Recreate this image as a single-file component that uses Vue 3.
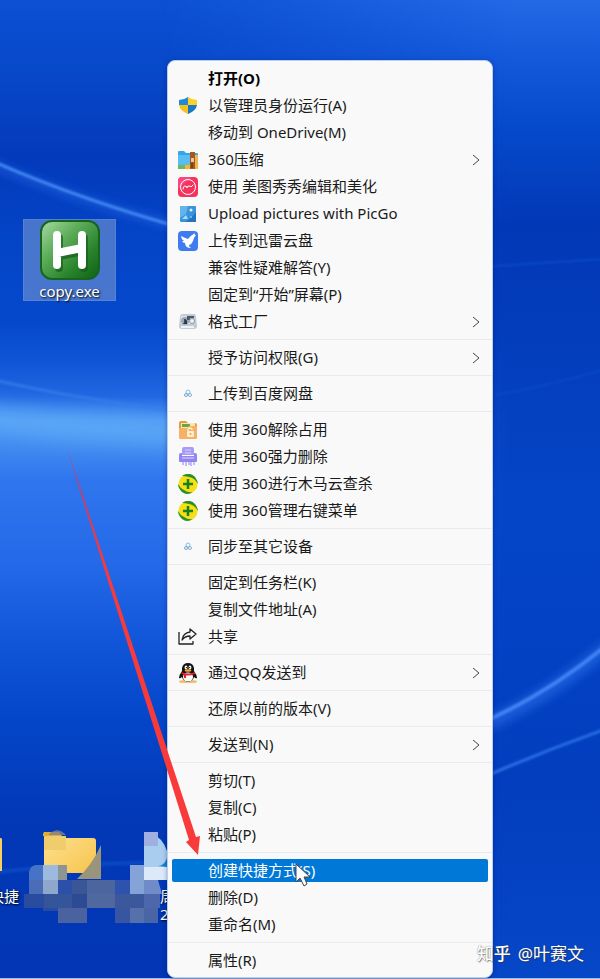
<script setup>
// Desktop with the classic right-click menu opened on copy.exe
import { ref } from "vue";

const groups = [
  [
    { key: "open", label: "打开(O)", bold: true },
    { key: "admin", label: "以管理员身份运行(A)", icon: "shield" },
    { key: "onedrive", label: "移动到 OneDrive(M)" },
    { key: "zip", label: "360压缩", icon: "zip", sub: true },
    { key: "meitu", label: "使用 美图秀秀编辑和美化", icon: "meitu" },
    { key: "picgo", label: "Upload pictures with PicGo", icon: "picgo" },
    { key: "xunlei", label: "上传到迅雷云盘", icon: "xunlei" },
    { key: "compat", label: "兼容性疑难解答(Y)" },
    { key: "pinstart", label: "固定到“开始”屏幕(P)" },
    { key: "format", label: "格式工厂", icon: "format", sub: true },
  ],
  [{ key: "access", label: "授予访问权限(G)", sub: true }],
  [{ key: "baidu", label: "上传到百度网盘", icon: "cloud" }],
  [
    { key: "unlock", label: "使用 360解除占用", icon: "unlock" },
    { key: "shred", label: "使用 360强力删除", icon: "shred" },
    { key: "scan", label: "使用 360进行木马云查杀", icon: "ball" },
    { key: "manage", label: "使用 360管理右键菜单", icon: "ball" },
  ],
  [{ key: "sync", label: "同步至其它设备", icon: "cloud" }],
  [
    { key: "pintask", label: "固定到任务栏(K)" },
    { key: "copypath", label: "复制文件地址(A)" },
    { key: "share", label: "共享", icon: "share" },
  ],
  [{ key: "qq", label: "通过QQ发送到", icon: "qq", sub: true }],
  [{ key: "restore", label: "还原以前的版本(V)" }],
  [{ key: "sendto", label: "发送到(N)", sub: true }],
  [
    { key: "cut", label: "剪切(T)" },
    { key: "copy", label: "复制(C)" },
    { key: "paste", label: "粘贴(P)" },
  ],
  [
    { key: "shortcut", label: "创建快捷方式(S)" },
    { key: "delete", label: "删除(D)" },
    { key: "rename", label: "重命名(M)" },
  ],
  [{ key: "props", label: "属性(R)" }],
];

const active = ref("shortcut");
</script>

<template>
  <main class="desktop">
    <svg class="wallpaper" viewBox="0 0 600 979" preserveAspectRatio="none" aria-hidden="true">
      <defs>
        <linearGradient id="wLeft" x1="0" y1="0" x2="0" y2="1">
          <stop offset="0" stop-color="#0d50d4" />
          <stop offset="0.08" stop-color="#0747c8" />
          <stop offset="0.16" stop-color="#033abb" />
          <stop offset="0.25" stop-color="#0445c8" />
          <stop offset="0.33" stop-color="#0648cc" />
          <stop offset="0.37" stop-color="#0f55d6" />
          <stop offset="0.405" stop-color="#2268e2" />
          <stop offset="0.43" stop-color="#468ff2" />
          <stop offset="0.46" stop-color="#3f88f0" />
          <stop offset="0.49" stop-color="#2f76ee" />
          <stop offset="0.58" stop-color="#2368e8" />
          <stop offset="0.66" stop-color="#1054d8" />
          <stop offset="0.74" stop-color="#0445c8" />
          <stop offset="0.84" stop-color="#0238b6" />
          <stop offset="1" stop-color="#0236b4" />
        </linearGradient>
        <linearGradient id="wRight" x1="0" y1="0" x2="0" y2="1">
          <stop offset="0" stop-color="#2269e6" />
          <stop offset="0.06" stop-color="#1459da" />
          <stop offset="0.13" stop-color="#054acb" />
          <stop offset="0.23" stop-color="#0238b6" />
          <stop offset="0.36" stop-color="#033ebc" />
          <stop offset="0.5" stop-color="#0444c6" />
          <stop offset="0.65" stop-color="#0342c4" />
          <stop offset="0.8" stop-color="#023ebe" />
          <stop offset="1" stop-color="#0647c8" />
        </linearGradient>
        <linearGradient id="wFade" x1="0" y1="0" x2="1" y2="0">
          <stop offset="0.27" stop-color="#fff" stop-opacity="0" />
          <stop offset="0.85" stop-color="#fff" />
        </linearGradient>
        <mask id="wMask"><rect width="600" height="979" fill="url(#wFade)" /></mask>
        <filter id="wSoft" x="-20%" y="-60%" width="140%" height="220%"><feGaussianBlur stdDeviation="9" /></filter>
        <filter id="wMid" x="-20%" y="-60%" width="140%" height="220%"><feGaussianBlur stdDeviation="4" /></filter>
        <filter id="wThin" x="-20%" y="-60%" width="140%" height="220%"><feGaussianBlur stdDeviation="1" /></filter>
      </defs>
      <rect width="600" height="979" fill="url(#wLeft)" />
      <rect width="600" height="979" fill="url(#wRight)" mask="url(#wMask)" />
      <!-- left ribbons -->
      <path d="M-30 404Q60 412 220 420V446Q60 444 -30 430Z" fill="#60acf8" opacity="0.8" filter="url(#wSoft)" />
      <path d="M-10 379Q70 398 190 413" fill="none" stroke="#3a7dea" stroke-width="3" opacity="0.7" filter="url(#wThin)" />
      <path d="M-10 163Q80 203 190 229" fill="none" stroke="#2d73ec" stroke-width="9" opacity="0.4" filter="url(#wMid)" />
      <path d="M-10 160Q80 200 190 230" fill="none" stroke="#4388f4" stroke-width="3" filter="url(#wThin)" />
      <path d="M-10 873Q80 862 190 862" fill="none" stroke="#1462d8" stroke-width="4" opacity="0.4" filter="url(#wThin)" />
      <!-- right ribbons -->
      <path d="M470 732Q550 698 620 636" fill="none" stroke="#2f75ee" stroke-width="14" opacity="0.5" filter="url(#wMid)" />
      <path d="M470 728Q550 695 620 634" fill="none" stroke="#4282f4" stroke-width="4" filter="url(#wThin)" />
      <path d="M470 783Q545 750 620 724" fill="none" stroke="#2a6ee4" stroke-width="3" filter="url(#wThin)" />
      <path d="M480 267L620 258" fill="none" stroke="#0c50cc" stroke-width="3" opacity="0.5" filter="url(#wThin)" />
      <path d="M480 397Q560 385 620 364" fill="none" stroke="#0d50cc" stroke-width="3" opacity="0.4" filter="url(#wThin)" />
      <rect y="978" width="600" height="1" fill="#9fbce8" />
    </svg>

    <button class="shortcut" type="button">
      <svg class="app-icon" viewBox="0 0 60 60" aria-hidden="true">
        <defs>
          <linearGradient id="ahk" x1="0" y1="0" x2="1" y2="1">
            <stop offset="0" stop-color="#a9dba4" />
            <stop offset="0.35" stop-color="#5fae5b" />
            <stop offset="0.7" stop-color="#28822b" />
            <stop offset="1" stop-color="#0f6216" />
          </linearGradient>
        </defs>
        <rect x="1" y="1" width="58" height="58" rx="11" fill="url(#ahk)" stroke="#17651d" stroke-width="2" />
        <path d="M18 16V46M43 16V46M18 34L43 29" transform="translate(1 2)" fill="none" stroke="#175c1b" stroke-width="8" stroke-linecap="round" opacity="0.7" />
        <path d="M17 15V45M42 15V45M17 33L42 28" fill="none" stroke="#fff" stroke-width="8" stroke-linecap="round" />
      </svg>
      <span class="app-name">copy.exe</span>
    </button>

    <!-- bottom row of desktop items, partly covered by mosaic -->
    <svg class="mosaic" viewBox="0 0 170 110" aria-hidden="true">
      <defs>
        <linearGradient id="fold" x1="0" y1="0" x2="1" y2="1">
          <stop offset="0" stop-color="#ffe394" />
          <stop offset="1" stop-color="#f6c34c" />
        </linearGradient>
      </defs>
      <path d="M0 18H1Q2 18 2 20V51H0Z" fill="#f8cf60" />
      <path d="M44 12H57L62 18H93Q96 18 96 21V50Q96 53 93 53H44Z" fill="url(#fold)" />
      <path d="M43 14Q43 12 46 12H59L62 16H43Z" fill="#e2ab35" />
      <path d="M49 14Q58 6 66 15H49Z" fill="#7c8290" opacity="0.8" />
      <rect x="44" y="16" width="22" height="14" fill="#f0cd6c" />
      <path d="M101 25V59H77Q92 45 101 25Z" fill="#9a947d" />
      <path d="M144 12H150Q163 18 167 31V60H144Z" fill="#a9cdef" />
      <path d="M144 12H158V26H144Z" fill="#9fb0e0" />
      <path d="M158 46Q164 46 167 38V47Z" fill="#1584cc" />
      <path d="M144 47H170V60H144Z" fill="#dce9f8" />
      <path d="M36 45H43V60H29V52Q30 46 36 45Z" fill="#4773c6" />
      <rect x="43" y="45" width="15" height="15" fill="#9db9dd" />
      <rect x="58" y="45" width="9" height="15" fill="#8d9494" />
      <rect x="29" y="60" width="14" height="14" fill="#4b6cb6" />
      <rect x="43" y="60" width="15" height="14" fill="#8fa7cd" />
      <rect x="58" y="60" width="14" height="14" fill="#2c50aa" />
      <rect x="72" y="60" width="15" height="14" fill="#3b5696" />
      <rect x="87" y="60" width="28" height="14" fill="#4c659f" />
      <rect x="115" y="60" width="15" height="14" fill="#2e53ae" />
      <rect x="130" y="45" width="14" height="29" fill="#86a3d8" />
      <path d="M144 60H158L162 74H144Z" fill="#6f8cc8" />
      <rect x="24" y="74" width="20" height="14" fill="#294c9f" />
      <rect x="44" y="74" width="28" height="14" fill="#35559b" />
      <rect x="72" y="74" width="15" height="14" fill="#2d4b94" />
      <rect x="87" y="74" width="28" height="14" fill="#5068a0" />
      <rect x="115" y="74" width="29" height="14" fill="#3c589c" />
      <path d="M144 74H160V88H144Z" fill="#4c67ab" />
      <rect x="43" y="88" width="15" height="3" fill="#284ca4" />
      <rect x="58" y="88" width="29" height="15" fill="#4a62a0" />
      <rect x="115" y="88" width="15" height="15" fill="#3755a0" />
      <rect x="130" y="88" width="14" height="15" fill="#5570aa" />
      <rect x="144" y="88" width="14" height="15" fill="#4a65a6" />
    </svg>
    <span class="cut-name left-name">快捷</span>
    <span class="cut-name right-name">周<br />2</span>

    <nav class="menu" aria-label="右键菜单">
      <ul v-for="(group, g) in groups" :key="g" class="group">
        <li v-for="item in group" :key="item.key">
          <button
            type="button"
            class="item"
            :class="{ bold: item.bold, active: item.key === active }"
            @mouseenter="active = item.key"
          >
            <svg class="icon" viewBox="0 0 20 20" aria-hidden="true">
              <g v-if="item.icon === 'shield'">
                <path d="M10 1Q6 4 1 4V9H10Z" fill="#2089d8" />
                <path d="M10 1Q14 4 19 4V9H10Z" fill="#fdd028" />
                <path d="M1 9H10V18Q2 15 1 9Z" fill="#f8c21c" />
                <path d="M19 9H10V18Q18 15 19 9Z" fill="#1579c8" />
              </g>
              <g v-else-if="item.icon === 'zip'">
                <path d="M0 2Q0 1 1 1H6L8 3H19Q20 3 20 4V17Q20 19 18 19H0Z" fill="#36a4e8" />
                <path d="M0 5H12V16H0Z" fill="#58bdf3" />
                <path d="M0 15H12V19H1Q0 19 0 18Z" fill="#6cb868" />
                <path d="M7 15H20V18Q20 19 19 19H7Z" fill="#f2b92b" />
                <path d="M17 5H20V17H17Z" fill="#eab850" />
                <rect x="12" y="2" width="5" height="17" fill="#a85524" />
                <path d="M13 8H16V12H13Z" fill="#e8c698" />
                <path d="M14 13V18" stroke="#5c2a10" stroke-width="1" />
              </g>
              <g v-else-if="item.icon === 'meitu'">
                <rect width="20" height="20" rx="4" fill="#f4335f" />
                <path d="M0 12V4Q0 0 4 0H14Z" fill="#fb457d" />
                <circle cx="10" cy="10" r="7.500" fill="none" stroke="#fff" stroke-width="1" />
                <path d="M5 12Q5 9 7 9T9 11Q9 9 11 9T13 10L15 8" fill="none" stroke="#fff" stroke-width="1" stroke-linecap="round" />
              </g>
              <g v-else-if="item.icon === 'picgo'">
                <rect x="2" y="2" width="16" height="16" rx="1" fill="#3b93db" />
                <path d="M2 2H10L8 10L2 14Z" fill="#62b4ec" />
                <path d="M18 8V18H7Q13 15 18 8Z" fill="#2375bf" />
                <circle cx="13" cy="6" r="1.500" fill="#d8f0ff" />
                <path d="M4 15L8 11L10 15Z" fill="#a9dbfa" />
                <circle cx="13" cy="13" r="1" fill="#79c4f3" />
              </g>
              <g v-else-if="item.icon === 'xunlei'">
                <rect width="20" height="20" rx="4" fill="#3f7cf2" />
                <path d="M3 5Q7 7 10 8Q12 5 17 2Q16 4 18 4Q16 6 15 10Q14 13 11 14Q11 16 13 17Q7 17 7 12Q5 12 4 10L6 10Q3 8 3 5Z" fill="#fff" />
              </g>
              <g v-else-if="item.icon === 'format'">
                <path d="M2 5Q2 2 5 2H16Q18 2 18 5L19 14Q19 17 16 17H4Q1 17 1 14Z" fill="#c4cad3" />
                <path d="M3 4H12V12H3Z" fill="#dfe4ea" />
                <circle cx="7" cy="9" r="4" fill="#9ba8b8" />
                <path d="M6 7Q10 7 9 12H5Q7 10 6 7Z" fill="#2a3a50" />
                <path d="M9 4H16V6H12V8H9Z" fill="#4c5868" />
                <circle cx="14" cy="9" r="2.500" fill="#edf1f5" stroke="#8f98a4" />
                <path d="M3 15H16" stroke="#eef1f5" stroke-width="2" />
              </g>
              <g v-else-if="item.icon === 'cloud'" fill="none" stroke-width="1" opacity="0.8">
                <circle cx="10" cy="8" r="2" stroke="#6aaed8" />
                <circle cx="8" cy="11" r="1.500" stroke="#4a93cf" />
                <circle cx="12" cy="11" r="1.500" stroke="#6d9cc0" />
              </g>
              <g v-else-if="item.icon === 'unlock'">
                <path d="M1 3Q1 1 3 1H8L10 3H17Q19 3 19 5V17Q19 19 17 19H3Q1 19 1 17Z" fill="#e9983a" />
                <path d="M3 3H17V8H3Z" fill="#f7e7b5" />
                <path d="M4 4H12V7H4Z" fill="#64a842" />
                <path d="M1 8H9L11 6H19V17Q19 19 17 19H3Q1 19 1 17Z" fill="#f6b165" />
                <rect x="9" y="11" width="7" height="6" rx="1" fill="#fff0d2" />
                <path d="M10 11V9Q12 7 14 9V10" fill="none" stroke="#fff0d2" stroke-width="1.300" />
                <circle cx="12.500" cy="14" r="1" fill="#ee9c3e" />
              </g>
              <g v-else-if="item.icon === 'shred'">
                <path d="M4 2Q4 0 6 0H14Q16 0 16 2V8H4Z" fill="#a79bf5" />
                <path d="M7 3H13M7 6H13" stroke="#d6cffd" stroke-width="1" />
                <path d="M1 8Q1 6 3 6H4V9H16V6H17Q19 6 19 8V14Q19 15 18 15H2Q1 15 1 14Z" fill="#9185f0" />
                <path d="M4 11H16" stroke="#b5acfa" stroke-width="2" />
                <path d="M5 15V18M8 15V19M11 15V18M13 15V19M16 15V18" stroke="#a79bf5" stroke-width="1.300" />
              </g>
              <g v-else-if="item.icon === 'ball'">
                <circle cx="10" cy="10" r="9.500" fill="#f8de15" />
                <path d="M4 2Q11 -3 17 3Q20 7 20 10Q17 4 11 3Q7 2 4 2Z" fill="#2a9028" />
                <path d="M0 10Q0 14 4 18Q9 22 15 18Q10 19 6 16Q2 14 0 10Z" fill="#2a9028" />
                <path d="M10 5V15M5 10H15" stroke="#14801f" stroke-width="2.500" />
              </g>
              <g v-else-if="item.icon === 'share'" fill="none" stroke="#222" stroke-width="1.300" stroke-linejoin="round">
                <path d="M1 5V17H15V14" />
                <path d="M12 2L18 7L12 12V9Q7 9 4 13Q5 6 12 5Z" />
              </g>
              <g v-else-if="item.icon === 'qq'">
                <ellipse cx="6" cy="18.500" rx="5" ry="1.500" fill="#f2c06a" />
                <ellipse cx="14" cy="18.500" rx="5" ry="1.500" fill="#f2c06a" />
                <path d="M10 0Q15 0 16 5V8Q19 12 19 15Q18 16 16 14Q15 18 10 19Q5 18 4 14Q2 16 1 15Q1 12 4 8V5Q5 0 10 0Z" fill="#141414" />
                <ellipse cx="10" cy="14" rx="5" ry="4.500" fill="#fff" />
                <ellipse cx="8" cy="4.500" rx="1.400" ry="2" fill="#fff" />
                <ellipse cx="12" cy="4.500" rx="1.400" ry="2" fill="#fff" />
                <circle cx="8.400" cy="4.600" r="0.700" fill="#111" />
                <circle cx="11.600" cy="4.600" r="0.700" fill="#111" />
                <ellipse cx="10" cy="7.500" rx="3.300" ry="1.200" fill="#f5ac22" />
                <path d="M3 9Q10 12 17 9V11Q12 13 8 12.500V15H6V12Q3 11 3 9Z" fill="#e0202a" />
              </g>
            </svg>
            <span class="label">{{ item.label }}</span>
            <svg v-if="item.sub" class="chevron" viewBox="0 0 8 12" aria-hidden="true">
              <path d="M1 1L7 6L1 11" fill="none" stroke="#444" stroke-width="1" />
            </svg>
          </button>
        </li>
      </ul>
    </nav>

    <!-- red pointer arrow -->
    <svg class="arrow" viewBox="0 0 136 402" aria-hidden="true">
      <defs>
        <linearGradient id="tail" gradientUnits="userSpaceOnUse" x1="0" y1="0" x2="0" y2="402">
          <stop offset="0" stop-color="#c04080" stop-opacity="0.3" />
          <stop offset="0.1" stop-color="#d03c5c" stop-opacity="0.9" />
          <stop offset="0.3" stop-color="#f93a3a" />
        </linearGradient>
      </defs>
      <path d="M0 0H1L128 384L132 383L130 402L118 389L121 387Z" fill="url(#tail)" />
    </svg>

    <svg class="cursor" viewBox="0 0 16 24" aria-hidden="true">
      <path d="M1 1V19L5 15L9 23L12 21L9 14H15Z" fill="#fff" stroke="#444" stroke-width="1" stroke-linejoin="round" />
    </svg>

    <p class="watermark"><b>知乎</b><span>@叶赛文</span></p>
  </main>
</template>

<style>
body {
  margin: 0;
}
</style>

<style scoped>
.desktop {
  position: relative;
  display: grid;
  grid-template-columns: 167fr 326fr 107fr;
  box-sizing: border-box;
  min-height: 100vh;
  padding: 60px 0 1px;
  overflow: hidden;
  background: #0342c4;
  font-family: "Noto Sans", "Noto Sans CJK SC", sans-serif;
  font-size: 15px;
  color: #1a1a1a;
}
.wallpaper {
  position: absolute;
  inset: 0;
  width: 100%;
  height: 100%;
}

/* selected desktop icon */
.shortcut {
  position: absolute;
  left: 23px;
  top: 219px;
  display: flex;
  flex-direction: column;
  align-items: center;
  gap: 2px;
  width: 93px;
  height: 82px;
  padding: 0;
  border: 1px solid rgba(150, 180, 235, 0.2);
  background: rgba(140, 165, 210, 0.5);
  font-family: inherit;
  color: #fff;
}
.app-icon {
  width: 60px;
  height: 60px;
}
.app-name,
.cut-name {
  font-size: 15px;
  line-height: 18px;
  text-shadow: 1px 1px 2px #000;
}
.cut-name {
  position: absolute;
  color: #fff;
}
.left-name {
  left: -11px;
  top: 887px;
}
.right-name {
  left: 160px;
  top: 887px;
}
.mosaic {
  position: absolute;
  left: 0;
  top: 820px;
  width: 170px;
  height: 110px;
}

/* context menu */
.menu {
  position: relative;
  grid-column: 2;
  padding: 4px 0 3px;
  border: 1px solid #b9cdec;
  border-radius: 8px;
  background: #f9f9f9;
  box-shadow: 0 1px 4px rgba(0, 20, 90, 0.4);
}
.group {
  margin: 0;
  padding: 0;
  list-style: none;
}
.group + .group {
  margin-top: 4px;
  padding-top: 4px;
  border-top: 1px solid #ebebed;
}
.item {
  display: flex;
  align-items: center;
  gap: 10px;
  box-sizing: border-box;
  width: calc(100% - 8px);
  height: 23px;
  margin: 2px 4px;
  padding: 0 8px 0 6px;
  border: 0;
  border-radius: 2px;
  background: transparent;
  font: inherit;
  line-height: 23px;
  color: inherit;
  text-align: left;
  white-space: nowrap;
}
.group li {
  display: flow-root;
}
.item.bold {
  font-weight: 700;
  color: #000;
}
.item.active {
  background: #0078d7;
  color: #fff;
}
.icon {
  flex: none;
  width: 20px;
  height: 20px;
}
.label {
  flex: 1;
}
.chevron {
  flex: none;
  width: 8px;
  height: 12px;
}

/* things drawn over the menu */
.arrow {
  position: absolute;
  left: 68px;
  top: 453px;
  width: 136px;
  height: 402px;
  pointer-events: none;
}
.cursor {
  position: absolute;
  left: 295px;
  top: 863px;
  width: 16px;
  height: 24px;
  pointer-events: none;
}
.watermark {
  position: absolute;
  right: 16px;
  bottom: 13px;
  display: flex;
  gap: 7px;
  margin: 0;
  font-size: 17px;
  line-height: 24px;
  color: #fff;
  text-shadow: 0 0 1px rgba(60, 60, 60, 0.7), 1px 1px 1px rgba(60, 60, 60, 0.5);
}
.watermark b {
  font-weight: 500;
}
</style>
